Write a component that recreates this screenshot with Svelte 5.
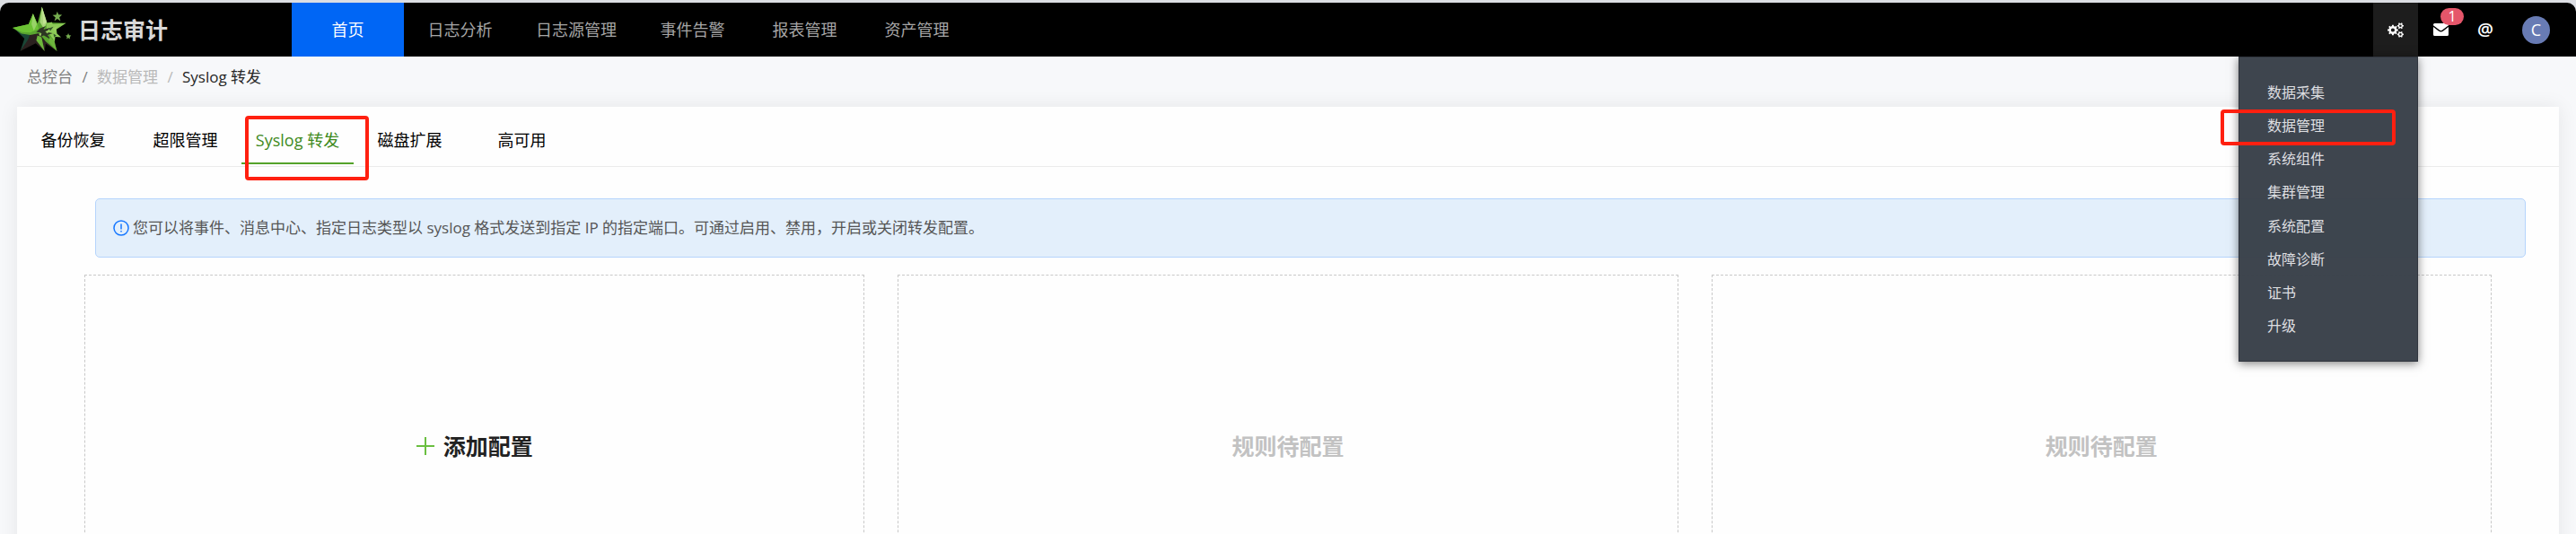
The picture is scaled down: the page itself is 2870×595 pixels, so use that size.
<script>
  const nav = ['首页', '日志分析', '日志源管理', '事件告警', '报表管理', '资产管理'];
  const tabs = ['备份恢复', '超限管理', 'Syslog 转发', '磁盘扩展', '高可用'];
  const menu = ['数据采集', '数据管理', '系统组件', '集群管理', '系统配置', '故障诊断', '证书', '升级'];

  // Outline of one toothed wheel with its hole, for the settings icon.
  function gear(cx, cy, outer, inner, hole, teeth) {
    const step = (Math.PI * 2) / teeth;
    const at = (r, a) => `${(cx + r * Math.cos(a)).toFixed(2)} ${(cy + r * Math.sin(a)).toFixed(2)}`;
    const points = [];
    for (let i = 0; i < teeth; i++) {
      const a = i * step;
      points.push(at(inner, a - step * 0.28), at(outer, a - step * 0.2), at(outer, a + step * 0.2), at(inner, a + step * 0.28));
    }
    return `M${points.join('L')}ZM${cx - hole} ${cy}a${hole} ${hole} 0 1 0 ${hole * 2} 0a${hole} ${hole} 0 1 0 ${-hole * 2} 0Z`;
  }
  const gears = gear(5.6, 8, 5.6, 4.3, 2, 8) + gear(13.6, 3.5, 3.4, 2.5, 1.2, 6) + gear(13.6, 12.6, 3.4, 2.5, 1.2, 6);
</script>

<div class="page">
  <header>
    <a class="brand" href="#home">
      <svg class="logo" viewBox="0 0 200 156" aria-hidden="true">
        <path fill="#1a4636" d="M6 74 60 78 58 112 26 151 40 108Z" />
        <path fill="#2b211f" d="M60 92 100 80 136 100 150 150 112 126 108 151 78 124 26 151 52 112Z" />
        <path fill="#5aa52f" d="M99 1 113 54 180 56 144 80 140 104 126 112 150 151 112 118 90 90 60 96 30 92 0 72 54 60 69 24 84 58Z" />
        <path fill="#6cc234" d="M0 72 54 60 69 24 84 58 88 76 60 88 32 86Z" />
        <path fill="#98d468" d="M69 24 82 60 72 82 64 60Z" />
        <path fill="#a9d77b" d="M99 1 116 54 106 76 92 52Z" />
        <path fill="#c2e394" d="M99 1 115 52 104 62Z" />
        <path fill="#8cc957" d="M114 58 132 52 136 60 180 56 148 76 150 92 164 104 144 102 142 120 128 98 116 84Z" />
        <path fill="#2c3522" d="M92 74 112 66 104 78 126 72 114 86 136 90 118 96 130 112 106 98 84 104 96 88 80 86Z" />
        <path fill="#6db53c" d="M84 98 98 104 108 151 80 114ZM126 104 140 112 150 151 122 118Z" />
        <path fill="#9acd62" d="M110 84 124 80 118 92ZM88 92 98 90 94 102ZM136 74 152 66 142 84Z" />
        <path fill="#34572a" d="m120 74 18-6-10 14ZM138 92l10 6-8 6Z" />
        <path fill="#76ac50" d="m151 17 4 10 12 1-9 8 4 13-11-7-10 7 4-12-10-8 12-1ZM188 90l3 7 7 1-5 5 1 7-6-4-6 4 2-7-5-5 6-1Z" />
      </svg>
      <strong>日志审计</strong>
    </a>
    <nav aria-label="主导航">
      {#each nav as item, i}
        <a href="#nav{i}" class:active={i === 0}>{item}</a>
      {/each}
    </nav>
    <div class="tools">
      <div class="settings">
        <button class="tool on" aria-label="设置" aria-expanded="true">
          <svg width="18" height="17" viewBox="0 0 17 16" fill="#fff" fill-rule="evenodd"><path d={gears} /></svg>
        </button>
        <ul class="menu">
          {#each menu as item, i}
            <li><a href="#menu{i}">{item}</a>{#if i === 1}<span class="mark"></span>{/if}</li>
          {/each}
        </ul>
      </div>
      <button class="tool" aria-label="消息">
        <svg width="17" height="14" viewBox="0 0 17 14" fill="#fff">
          <path d="M1.5 0h14A1.5 1.5 0 0 1 17 1.5v.8L10 7.6q-1.500 1-3 0L0 2.300v-.8A1.500 1.500 0 0 1 1.500 0Z" />
          <path d="m0 4 6.200 4.800q2.300 1.500 4.600 0L17 4v8.500a1.500 1.500 0 0 1-1.500 1.500h-14A1.500 1.500 0 0 1 0 12.500Z" />
        </svg>
        <span class="badge">1</span>
      </button>
      <button class="tool at" aria-label="提及">@</button>
      <button class="avatar" aria-label="账户">C</button>
    </div>
  </header>

  <div class="crumbs">
    <a href="#console">总控台</a><i>/</i><span class="pale">数据管理</span><i class="pale">/</i><span class="here">Syslog 转发</span>
  </div>

  <main>
    <div class="tabs" role="tablist">
      {#each tabs as tab, i}
        <button role="tab" aria-selected={i === 2} class:current={i === 2}>{tab}{#if i === 2}<span class="mark"></span>{/if}</button>
      {/each}
    </div>
    <div class="notice">
      <svg width="18" height="18" viewBox="0 0 18 18" fill="none" stroke="#1677ff" aria-hidden="true">
        <circle cx="9" cy="9" r="8" stroke-width="1.500" /><path d="M9 4.500v6M9 12v1.500" stroke-width="1.500" />
      </svg>
      <span>您可以将事件、消息中心、指定日志类型以 syslog 格式发送到指定 IP 的指定端口。可通过启用、禁用，开启或关闭转发配置。</span>
    </div>
    <div class="rules">
      <button class="rule">
        <svg width="20" height="22" viewBox="0 0 20 22" stroke="#6abf40" stroke-width="2" aria-hidden="true"><path d="M0 11h20M10 1v20" /></svg>
        添加配置
      </button>
      <div class="rule empty">规则待配置</div>
      <div class="rule empty">规则待配置</div>
    </div>
  </main>
</div>

<style>
  .page {
    box-sizing: border-box;
    height: 100vh;
    overflow: hidden;
    display: flex;
    flex-direction: column;
    padding-top: 3px;
    background: linear-gradient(#dcdee3 0 20px, #f7f8fa 20px);
    color: #000;
    font: 18px/24px "Open Sans", "Noto Sans CJK SC", sans-serif;
  }
  a { color: inherit; text-decoration: none; }
  button { border: 0; padding: 0; background: none; color: inherit; font: inherit; cursor: pointer; }
  header {
    flex: none;
    display: flex;
    height: 60px;
    border-radius: 10px 10px 0 0;
    background: #000;
  }
  .brand {
    box-sizing: border-box;
    width: 325px;
    display: flex;
    align-items: center;
    gap: 7px;
    padding-left: 14px;
    color: #d9d9d9;
    font-size: 25px;
  }
  .logo { width: 66px; height: 52px; }
  nav { display: flex; flex: 1; color: #a6a6a6; }
  nav a {
    box-sizing: border-box;
    min-width: 125px;
    padding: 0 22px;
    line-height: 60px;
    text-align: center;
    white-space: nowrap;
  }
  nav .active { background: #0066f5; color: #fff; }
  .tools { display: flex; align-items: center; padding-right: 29px; }
  .settings { position: relative; }
  .tool {
    position: relative;
    display: flex;
    align-items: center;
    justify-content: center;
    width: 50px;
    height: 60px;
    color: #fff;
  }
  .on { background: #1d1d1d; }
  .at { font-size: 20px; font-weight: 600; }
  .badge {
    position: absolute;
    top: 6px;
    left: 25px;
    width: 26px;
    border-radius: 10px;
    background: #e5566a;
    font-size: 16px;
    line-height: 19px;
    text-align: center;
  }
  .avatar {
    width: 31px;
    height: 31px;
    margin-left: 16px;
    border-radius: 50%;
    background: #687bb4;
    color: #fff;
    line-height: 31px;
  }
  .menu {
    position: absolute;
    z-index: 2;
    top: 60px;
    right: 0;
    box-sizing: border-box;
    width: 200px;
    height: 340px;
    display: grid;
    grid-auto-rows: 1fr;
    margin: 0;
    padding: 20px 0;
    border: 1px solid #30353e;
    background: rgba(56, 63, 72, 0.97);
    box-shadow: 0 2px 10px rgba(0, 0, 0, 0.5);
    color: #dedfe1;
    font-size: 16px;
    list-style: none;
  }
  .menu li { position: relative; display: flex; align-items: center; padding-left: 31px; }
  .mark {
    position: absolute;
    box-sizing: border-box;
    border: 4px solid #ff2010;
    border-radius: 4px;
    pointer-events: none;
  }
  .menu .mark { top: 1px; right: 24px; left: -21px; height: 40px; }
  .crumbs { flex: none; display: flex; padding: 11px 30px 21px; color: #808080; font-size: 17px; }
  .crumbs i { width: 27px; font-style: normal; text-align: center; }
  .crumbs .pale { color: #b9b9b9; }
  .crumbs .here { color: #262626; }
  main {
    flex: none;
    margin: 0 19px;
    background: #fefefe;
    box-shadow: 0 0 20px rgba(0, 0, 0, 0.08);
  }
  .tabs { display: flex; height: 66px; border-bottom: 1px solid #ebebeb; }
  .tabs button {
    position: relative;
    width: 125px;
    padding-top: 12px;
    border-bottom: 2px solid transparent;
    margin-bottom: 2px;
  }
  .tabs .current { border-color: #54a32a; color: #3f8a1d; }
  .tabs .mark { top: 10px; left: 4px; width: 138px; height: 72px; }
  .notice {
    display: flex;
    align-items: center;
    gap: 4px;
    margin: 35px 37px 19px 87px;
    padding: 20px 19px;
    border: 1px solid #b5d4fc;
    border-radius: 5px;
    background: #e3effb;
    color: #555;
    font-size: 17px;
  }
  .rules { display: grid; grid-template-columns: repeat(3, 1fr); gap: 37px; padding: 0 75px 40px; }
  .rule {
    box-sizing: border-box;
    height: 382px;
    display: flex;
    align-items: center;
    justify-content: center;
    gap: 10px;
    border: 1px dashed #c8c8c8;
    color: #222;
    font-size: 25px;
    font-weight: 700;
  }
  .empty { color: #c2c2c2; }
</style>
